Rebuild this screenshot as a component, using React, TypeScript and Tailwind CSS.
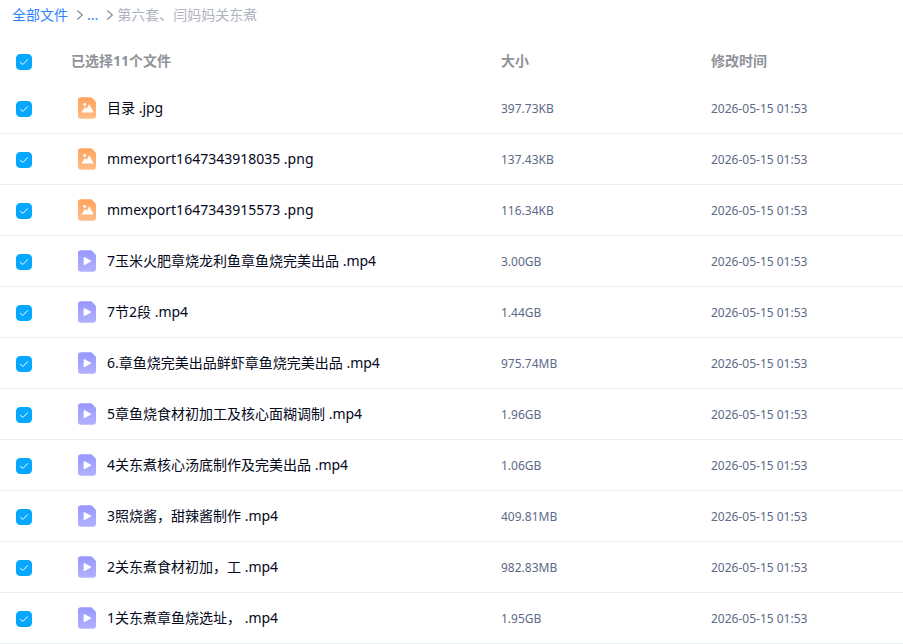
import { useState } from "react";

type FileItem = {
    name: string;
    kind: "image" | "video";
    size: string;
    modified: string;
};

const FILES: FileItem[] = [
    { name: "目录 .jpg", kind: "image", size: "397.73KB", modified: "2026-05-15 01:53" },
    { name: "mmexport1647343918035 .png", kind: "image", size: "137.43KB", modified: "2026-05-15 01:53" },
    { name: "mmexport1647343915573 .png", kind: "image", size: "116.34KB", modified: "2026-05-15 01:53" },
    { name: "7玉米火肥章烧龙利鱼章鱼烧完美出品 .mp4", kind: "video", size: "3.00GB", modified: "2026-05-15 01:53" },
    { name: "7节2段 .mp4", kind: "video", size: "1.44GB", modified: "2026-05-15 01:53" },
    { name: "6.章鱼烧完美出品鲜虾章鱼烧完美出品 .mp4", kind: "video", size: "975.74MB", modified: "2026-05-15 01:53" },
    { name: "5章鱼烧食材初加工及核心面糊调制 .mp4", kind: "video", size: "1.96GB", modified: "2026-05-15 01:53" },
    { name: "4关东煮核心汤底制作及完美出品 .mp4", kind: "video", size: "1.06GB", modified: "2026-05-15 01:53" },
    { name: "3照烧酱，甜辣酱制作 .mp4", kind: "video", size: "409.81MB", modified: "2026-05-15 01:53" },
    { name: "2关东煮食材初加，工 .mp4", kind: "video", size: "982.83MB", modified: "2026-05-15 01:53" },
    { name: "1关东煮章鱼烧选址， .mp4", kind: "video", size: "1.95GB", modified: "2026-05-15 01:53" },
];

function Checkbox({ label, checked, onChange }: { label: string; checked: boolean; onChange: () => void }) {
    return (
        <label className="grid size-4 cursor-pointer">
            <input
                type="checkbox"
                aria-label={label}
                checked={checked}
                onChange={onChange}
                className="peer col-start-1 row-start-1 size-4 appearance-none rounded border border-gray-300 checked:border-[#06a7ff] checked:bg-[#06a7ff]"
            />
            <svg viewBox="0 0 16 16" className="pointer-events-none invisible col-start-1 row-start-1 size-4 peer-checked:visible" aria-hidden="true">
                <path d="M4.2 8.1 6.8 10.5 11.8 5.4" fill="none" stroke="#fff" strokeWidth="1" />
            </svg>
        </label>
    );
}

function FileIcon({ kind }: { kind: FileItem["kind"] }) {
    const image = kind === "image";
    const id = image ? "image-fill" : "video-fill";
    return (
        <svg viewBox="0 0 18 22" className="h-[22px] w-[18px] shrink-0" aria-hidden="true">
            <defs>
                <linearGradient id={id} x1="0" y1="0" x2="0" y2="1">
                    <stop offset="0" stopColor={image ? "#ffa25c" : "#9797ff"} />
                    <stop offset="1" stopColor={image ? "#ffbd88" : "#b1b1ff"} />
                </linearGradient>
            </defs>
            <path d="M3 .3h9.8c.6 0 1 .2 1.400.6l3.200 3.300c.4.4.6.9.6 1.400v13.200a3 3 0 0 1-3 3H3a3 3 0 0 1-3-3V3.300a3 3 0 0 1 3-3z" fill={`url(#${id})`} />
            {image ? (
                <g fill="#fff">
                    <circle cx="6.7" cy="7.5" r="1.4" />
                    <path d="M3.500 15.400 6.700 10.400q.5-.7 1 0l1 1.500 2-4q.5-.8 1 0l3.500 6.700q.3.900-.6.900H4q-.7 0-.5-.5z" />
                </g>
            ) : (
                <path d="M5.6 8v6.200q0 1.200 1.100.7l6-3.200q.8-.6 0-1.200l-6-3.200q-1.100-.5-1.100.7z" fill="#fff" />
            )}
        </svg>
    );
}

function Chevron() {
    return (
        <svg viewBox="0 0 8 12" className="h-3 w-2 shrink-0" aria-hidden="true">
            <path d="M1.3 1.500 6.300 6 1.300 10.500" fill="none" stroke="#818999" strokeWidth="1.2" />
        </svg>
    );
}

function Breadcrumb() {
    return (
        <nav className="flex h-[30px] items-center gap-[3px] px-3 text-sm text-[#afb3bf]">
            <a href="#all" className="mr-[5px] text-[#2e82ff]">全部文件</a>
            <Chevron />
            <a href="#parent" className="mr-[5px] text-[#2e82ff]">...</a>
            <Chevron />
            <span>第六套、闫妈妈关东煮</span>
        </nav>
    );
}

export default function App() {
    const [selected, setSelected] = useState<string[]>(FILES.map((f) => f.name));

    const toggle = (name: string) =>
        setSelected(selected.includes(name) ? selected.filter((n) => n !== name) : [...selected, name]);

    const toggleAll = () => setSelected(selected.length === FILES.length ? [] : FILES.map((f) => f.name));

    return (
        <div className="bg-white font-['Noto_Sans','Noto_Sans_CJK_SC',sans-serif]">
            <Breadcrumb />
            <table className="mt-2 w-full table-fixed border-separate border-spacing-0 text-left">
                <thead>
                    <tr className="h-[45px] text-sm text-[#909399]">
                        <th className="w-[71px] pt-[2px] pl-4">
                            <Checkbox label="全选" checked={selected.length === FILES.length} onChange={toggleAll} />
                        </th>
                        <th className="font-bold">已选择{selected.length}个文件</th>
                        <th className="w-[210px] font-bold">大小</th>
                        <th className="w-[192px] font-bold">修改时间</th>
                    </tr>
                </thead>
                <tbody>
                    {FILES.map((file) => (
                        <tr key={file.name} className="h-[51px] text-xs text-[#5d6a87] *:border-b *:border-[#ebeef5]">
                            <td className="pt-[2px] pl-4">
                                <Checkbox label={file.name} checked={selected.includes(file.name)} onChange={() => toggle(file.name)} />
                            </td>
                            <td>
                                <div className="flex items-center gap-[11px] pl-[7px] text-sm text-[#03081a]">
                                    <FileIcon kind={file.kind} />
                                    <span className="truncate">{file.name}</span>
                                </div>
                            </td>
                            <td className="pt-[2px]">{file.size}</td>
                            <td className="pt-[2px]">{file.modified}</td>
                        </tr>
                    ))}
                </tbody>
            </table>
        </div>
    );
}
